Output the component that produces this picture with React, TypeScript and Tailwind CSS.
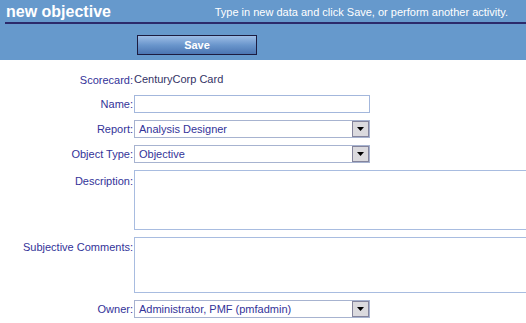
import React from "react";

const DropArrow = () => (
    <span className="ml-auto mr-0 flex h-[16px] w-[17px] shrink-0 items-center justify-center border border-[#84849c] bg-[#dbdade]">
        <svg width="7" height="4" viewBox="0 0 7 4">
            <polygon points="0,0 7,0 3.5,4" fill="#000"/>
        </svg>
    </span>
)

const Select = ({value}: { value: string }) => (
    <div className="flex h-[18px] w-[236px] items-center border border-[#a7b3d0] bg-white">
        <span className="pl-[4px] text-[11px] leading-[16px] text-[#333399]">{value}</span>
        <DropArrow/>
    </div>
)

const Label = ({text}: { text: string }) => (
    <div className="w-[134px] shrink-0 pr-[1px] text-right text-[11px] leading-[18px] text-[#333399]">{text}</div>
)

export default function App() {
    return (
        <div className="h-[323px] w-[526px] overflow-hidden bg-white font-['Liberation_Sans',Arial,sans-serif]">
            <div className="h-[60px] bg-[#6699cc] pl-[5px]">
                <div className="flex h-[24px] items-end justify-between border-b-2 border-[#2b2a6b]">
                    <h1 className="pl-[1px] text-[16px] font-bold leading-[20px] text-white">new objective</h1>
                    <p className="pr-[18px] text-[11px] leading-[20px] text-white">
                        Type in new data and click Save, or perform another activity.
                    </p>
                </div>
                <button
                    className="ml-[132px] mt-[11px] block h-[20px] w-[120px] border border-[#1c1c40] bg-gradient-to-b from-[#9dbde6] via-[#6a96cc] to-[#4b75b2] text-[11px] font-bold leading-[18px] text-white">
                    Save
                </button>
            </div>

            <div className="flex flex-col gap-[7px] pt-[11px]">
                <div className="flex h-[17px] items-center">
                    <Label text="Scorecard:"/>
                    <span className="text-[11px] leading-[17px] text-[#333366]">CenturyCorp Card</span>
                </div>
                <div className="flex h-[18px]">
                    <Label text="Name:"/>
                    <div className="h-[18px] w-[236px] border border-[#a3b7dc] bg-white"></div>
                </div>
                <div className="flex h-[18px]">
                    <Label text="Report:"/>
                    <Select value="Analysis Designer"/>
                </div>
                <div className="flex h-[18px]">
                    <Label text="Object Type:"/>
                    <Select value="Objective"/>
                </div>
                <div className="flex h-[60px]">
                    <div className="w-[134px] shrink-0 pr-[1px] pt-[2px] text-right text-[11px] leading-[18px] text-[#333399]">
                        Description:
                    </div>
                    <div className="h-[60px] w-[420px] shrink-0 border border-[#a8bce0] bg-white"></div>
                </div>
                <div className="flex h-[56px]">
                    <div className="w-[134px] shrink-0 pr-[1px] pt-[1px] text-right text-[11px] leading-[18px] text-[#333399]">
                        Subjective Comments:
                    </div>
                    <div className="h-[56px] w-[420px] shrink-0 border border-[#a8bce0] bg-white"></div>
                </div>
                <div className="flex h-[18px]">
                    <Label text="Owner:"/>
                    <Select value="Administrator, PMF (pmfadmin)"/>
                </div>
            </div>
        </div>
    );
}
